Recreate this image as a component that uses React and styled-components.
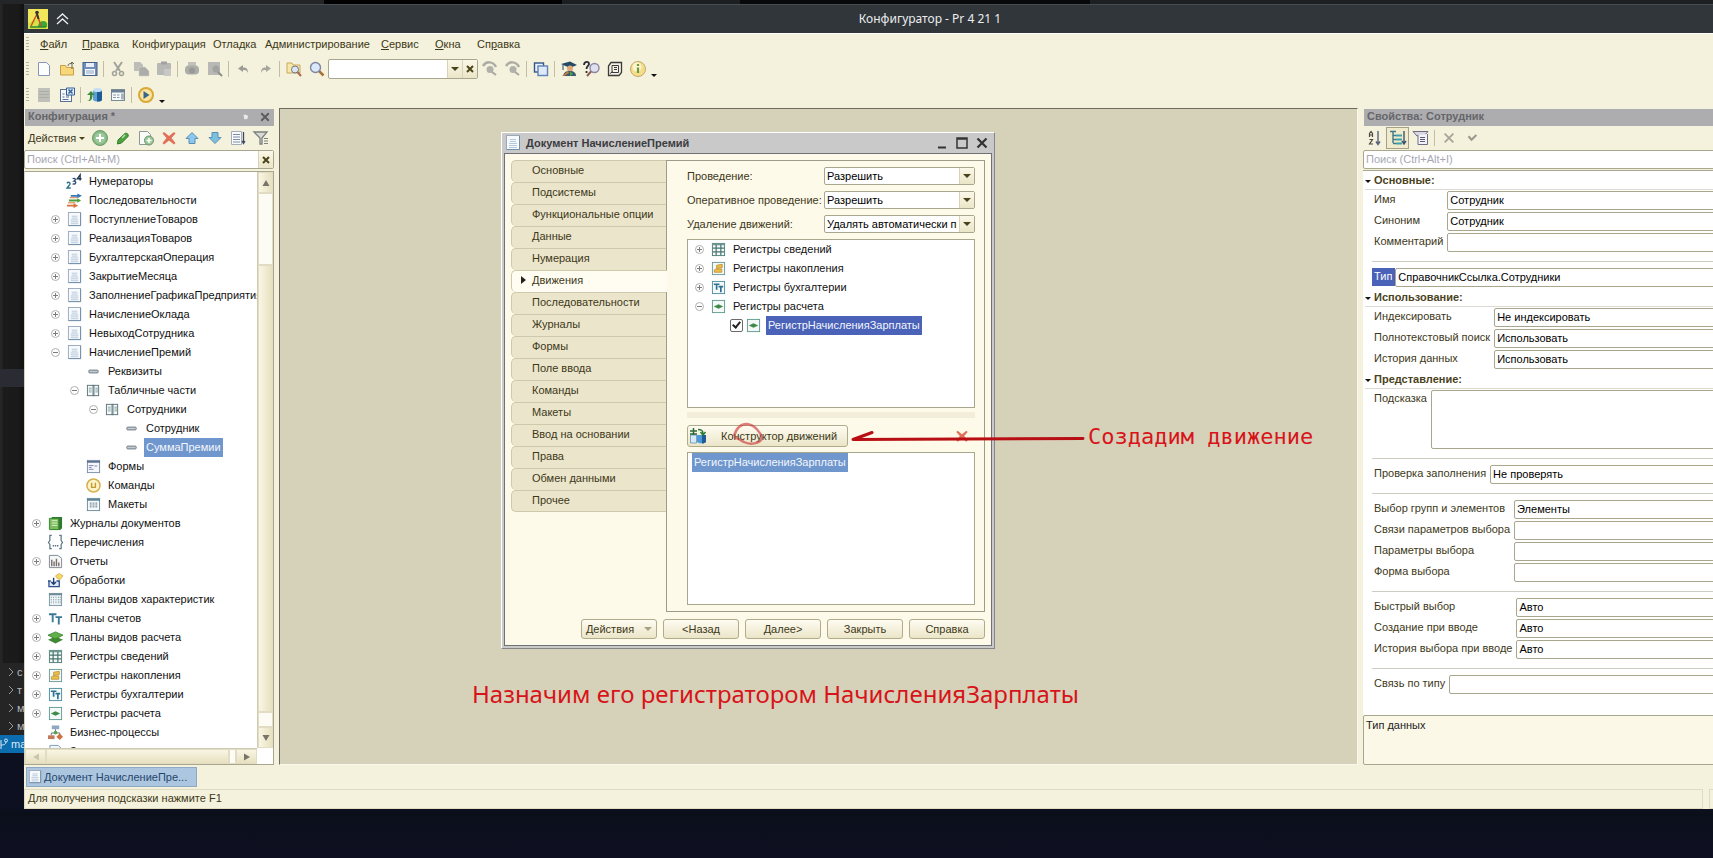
import React from "react";
import styled, { createGlobalStyle, css } from "styled-components";

const c = {
  chrome: "#f4f1dc",
  cream: "#fdfaea",
  line: "#a8a68c",
  text: "#3d3818",
  canvas: "#d6d1b9",
  header: "#adadaf",
};

const Global = createGlobalStyle`
  *, *::before, *::after { box-sizing: border-box; }
  body { margin: 0; background: #0d0f1c; }
  body, button, input, select, textarea {
    font-family: "Liberation Sans", Arial, sans-serif;
    font-size: 11px;
    line-height: 13px;
    color: ${c.text};
  }
  button { background: none; border: 0; padding: 0; }
  input, select, textarea { outline: none; margin: 0; }
  ul { list-style: none; margin: 0; padding: 0; }
  p, h1, h2, h3 { margin: 0; font-size: 11px; }
`;

/* ---------- icons ---------- */

const Svg = styled.svg`
  display: block;
  flex: none;
  overflow: visible;
`;

const sheet = (
  <>
    <rect x="1.500" y="0.500" width="13" height="14" fill="#f7fafd" stroke="#9aa8ba" />
    <path d="M14.500 1v13.500H2" fill="none" stroke="#6f8fa8" />
    <path d="M5 4.500h6M5 6.500h6M4 8.500h8M4 10.500h8M4 12.500h8" stroke="#b4c6da" />
  </>
);
const framed = (stroke, inner) => (
  <>
    <rect x="1.500" y="1.500" width="13" height="13" fill="#f4f9f8" stroke={stroke} />
    {inner}
  </>
);
const calc = <path d="M8 5.500l5 2.500-5 2.500L3 8z" fill="#3f8a48" />;
const tt = <path d="M1 3.500h8M5 3.500V12M8 6.500h7M11.500 6.500V14.500" stroke="#3a7a96" strokeWidth="2" fill="none" />;
const lens = (
  <>
    <path d="M10 10l4.500 4.500" stroke="#a8743c" strokeWidth="2.500" />
    <circle cx="6.500" cy="6.500" r="5" fill="#dbe8fa" stroke="#7d86a0" strokeWidth="1.400" />
  </>
);

const ICONS = {
  newDoc: <path d="M2.500 1.500h8l3 3v10h-11z" fill="#fbfdff" stroke="#8a93b8" />,
  open: (
    <>
      <path d="M1.500 4.500h5l1 2h7v7.500h-13z" fill="#f7d77a" stroke="#c9a048" />
      <path d="M9 5c0-2 1-2.500 4-2.500M13 1v7M11 3l2-2 2 2" fill="none" stroke="#6b6b58" />
    </>
  ),
  save: (
    <>
      <rect x="1" y="1.500" width="14" height="13" fill="#6f8fb8" stroke="#43608c" />
      <rect x="4" y="2" width="8" height="4" fill="#e7eef8" />
      <rect x="3" y="8" width="10" height="6" fill="#f5f8fc" />
      <path d="M4 10h8M4 12h8" stroke="#8ba3c4" />
    </>
  ),
  cut: (
    <>
      <path d="M4 1l6 9M12 1L6 10" stroke="#a2a29c" strokeWidth="2" />
      <circle cx="4.500" cy="12.500" r="2" fill="none" stroke="#a2a29c" strokeWidth="1.500" />
      <circle cx="11.500" cy="12.500" r="2" fill="none" stroke="#a2a29c" strokeWidth="1.500" />
    </>
  ),
  copy: (
    <>
      <path d="M1 1h6l3 3v6H1z" fill="#bcbcb8" />
      <path d="M6 6h6l4 4v5H6z" fill="#acaca8" stroke="#d4d2c4" strokeWidth=".6" />
    </>
  ),
  paste: (
    <>
      <rect x="1" y="2" width="14" height="12" rx="1" fill="#b8b8b6" />
      <rect x="5" y="0.500" width="6" height="3" fill="#a2a2a0" />
      <path d="M8 8h7v7H8z" fill="#c8c8c6" />
    </>
  ),
  print: (
    <>
      <rect x="4" y="1" width="8" height="5" fill="#c2c2bd" />
      <rect x="1" y="4.500" width="14" height="9" rx="4" fill="#acaca8" />
      <circle cx="8" cy="9.500" r="3" fill="#989894" />
    </>
  ),
  preview: (
    <>
      <path d="M1 1h12v13H1z" fill="#b8b8b4" />
      <circle cx="9" cy="8" r="3.500" fill="#a3a3a1" />
      <path d="M11 11l4 4" stroke="#8f8f8d" strokeWidth="2" />
    </>
  ),
  undo: <path d="M3 7.500L8 4v2.500c4 0 5 2 5 5.500-1-2.500-2-3-5-3V11z" fill="#9c9c95" />,
  redo: <path d="M13 7.500L8 4v2.500c-4 0-5 2-5 5.500 1-2.500 2-3 5-3V11z" fill="#a5a79c" />,
  findIn: (
    <>
      <path d="M1 2h5l1 2h7v8H1z" fill="#f8e8a8" stroke="#c8a95c" />
      <circle cx="9" cy="8.500" r="3.500" fill="#dbe6f5" stroke="#6f7485" />
      <path d="M11.500 11l3.500 4" stroke="#b06a52" strokeWidth="2" />
    </>
  ),
  find: lens,
  findNext: (
    <>
      <path d="M1 5c3-5 10-5 13 1" fill="none" stroke="#acaca4" strokeWidth="2.500" />
      <circle cx="8" cy="8.500" r="3.500" fill="#b1b1ab" />
      <path d="M10 11l4 3" stroke="#a8a7a0" strokeWidth="2" />
    </>
  ),
  windows: (
    <>
      <rect x="1.500" y="2" width="9" height="9" fill="#eaf1fb" stroke="#35548a" strokeWidth="1.400" />
      <rect x="5" y="5" width="9.500" height="9.500" fill="#dfe9f8" stroke="#5f82ba" strokeWidth="1.400" />
    </>
  ),
  scholar: (
    <>
      <path d="M0 3l9-2.500L16 4 9 7z" fill="#254a66" />
      <path d="M2 4v5" stroke="#254a66" />
      <circle cx="9" cy="7.500" r="3" fill="#e0a878" />
      <path d="M2 15c1-4 3-5 7-5s6 2 6 5H9z" fill="#3f5870" />
      <path d="M1 15l6-5 1 2-5 3z" fill="#c5813b" />
      <path d="M9 10l3 3-3 2z" fill="#45a84a" />
    </>
  ),
  syntax: (
    <>
      <path d="M0 4c0-4 5-4 5-1 0 2-2.500 2-2.500 5M2.500 10v2" fill="none" stroke="#2c2c38" strokeWidth="1.800" />
      <circle cx="10.500" cy="7" r="4.500" fill="#dfe0f0" stroke="#8b87a0" strokeWidth="1.400" />
      <path d="M7 10.500L3 15" stroke="#8c5a50" strokeWidth="2" />
    </>
  ),
  book: (
    <>
      <path d="M4 1.500h10.500v10L12 14.500H1.500V5z" fill="#f4f1e6" stroke="#3a3a36" strokeWidth="1.300" />
      <path d="M5 4.500h6.500v7H5zM7 6.500h3M7 8.500h3M3 12.500l3-2" fill="none" stroke="#3a3a36" />
    </>
  ),
  info: (
    <>
      <circle cx="8" cy="8" r="7.500" fill="#f5dd8c" stroke="#c2a86c" />
      <circle cx="7" cy="6" r="4.500" fill="#fcf3cf" />
      <path d="M8 3v2M8 6.500V12" stroke="#6a9a3c" strokeWidth="2.200" />
    </>
  ),
  listGray: (
    <>
      <rect x="2" y="1" width="12" height="14" fill="#c0c0ba" />
      <path d="M3 4.500h10M3 7.500h10M3 10.500h10" stroke="#acaca4" />
    </>
  ),
  docConf: (
    <>
      <rect x="1.500" y="2.500" width="11" height="12" fill="#f6f9fc" stroke="#5c6f92" />
      <path d="M3.500 7h2M7 8h3M3.500 10h2M7 10h3M3.500 12.500h6" stroke="#5c6f92" />
      <path d="M7.500 1h8v7h-8z" fill="#e2edf8" stroke="#345f9a" />
      <path d="M9.500 2.500l4 4M13.500 2.500l-4 4" stroke="#345f9a" strokeWidth="1.500" />
    </>
  ),
  dbUpdate: (
    <>
      <path d="M6 3v10c2 2 8 2 9 0V3z" fill="#5f9fd8" />
      <path d="M10 3v11.500c3 0 4-.5 5-1.500V3z" fill="#1c5b94" />
      <ellipse cx="10.500" cy="3" rx="4.500" ry="2" fill="#c4def5" />
      <path d="M0 14c3 0 3-3 3-6H0l4-4 4 4H5.500c0 4-1 6.500-5.500 6z" fill="#3d8a3c" />
    </>
  ),
  tableCfg: (
    <>
      <rect x="1.500" y="2.500" width="13" height="11" fill="#f7fafa" stroke="#7a8b98" />
      <path d="M1 3h14v2.500H1z" fill="#6b8092" />
      <path d="M3 8h3M3 10.500h3M7 8h2.500M7 10.500h2.500" stroke="#8a98a4" strokeWidth="1.200" />
      <path d="M11 6.500h3v6h-3z" fill="#a9b4be" />
    </>
  ),
  play: (
    <>
      <circle cx="8" cy="8" r="7" fill="#fae6a0" stroke="#d9a838" strokeWidth="2" />
      <path d="M5.500 4l6 4-6 4z" fill="#3a6488" />
    </>
  ),
  add: (
    <>
      <circle cx="8" cy="8" r="7.500" fill="#87b987" stroke="#6d9a6d" />
      <circle cx="8" cy="8" r="5.500" fill="#9aca98" />
      <path d="M8 4v8M4 8h8" stroke="#fff" strokeWidth="2" />
    </>
  ),
  edit: (
    <>
      <path d="M3 10l7-6.500c2-1 4 1 3 3L6.500 13 2.500 14z" fill="#4fa23e" stroke="#2d7a2a" />
      <path d="M7 8l3-3" stroke="#b8e2a8" strokeWidth="1.500" />
    </>
  ),
  addCopy: (
    <>
      <path d="M1.500 1.500h8l3 3v10h-11z" fill="#fbfcf8" stroke="#8a9a98" />
      <circle cx="11" cy="10.500" r="4.500" fill="#9cc898" stroke="#6d946d" />
      <path d="M11 8v5M8.500 10.500h5" stroke="#fff" strokeWidth="1.500" />
    </>
  ),
  remove: <path d="M3 2l5 4 5-4 1.500 1.500L10.500 8l4 5L13 14.500 8 10.500 3 14.500 1.500 13l4-5-4-4.500z" fill="#e0705a" />,
  up: <path d="M8 2.500l6 6H11v5H5v-5H2z" fill="#8cc8ec" stroke="#5a8fb4" />,
  down: <path d="M8 13.500l-6-6h3v-5h6v5h3z" fill="#7cc0e0" stroke="#5a8fb4" />,
  sort: (
    <>
      <path d="M1.500 1.500h10v13h-10z" fill="#f9fafb" stroke="#a5adba" />
      <path d="M3 4.500h7M3 7h7M3 9.500h7M3 12h7" stroke="#7c8da8" />
      <path d="M13.500 2v11M12 11l1.500 2.500L15 11" stroke="#3b4a63" fill="none" strokeWidth="1.300" />
    </>
  ),
  filter: (
    <>
      <path d="M1 2h13L9 8v6H7V8z" fill="#d8d8d4" stroke="#7a827e" strokeWidth="1.300" />
      <path d="M11 8.500h4M11 11h4M11 13.500h4" stroke="#7a827e" strokeWidth="1.200" />
    </>
  ),
  az: (
    <>
      <path d="M2.500 7V3.500L4 1.500l1.500 2V7M2.500 5h3M2.500 9.500h3L2.500 14h3.500" fill="none" stroke="#4a4a44" strokeWidth="1.200" />
      <path d="M11 1v13M9 11.500l2 3 2-3" fill="none" stroke="#5a6478" strokeWidth="1.400" />
    </>
  ),
  category: (
    <>
      <path d="M0 1.500h6M3 2v11M3 5.500h3M3 9.500h3M3 13.500h3" fill="none" stroke="#40788a" strokeWidth="1.400" />
      <path d="M6 5.500h6M6 9.500h6M6 13.500h6" stroke="#3fa0a8" strokeWidth="2" />
      <path d="M14 1v12M12 11l2 3 2-3" fill="none" stroke="#3f5670" strokeWidth="1.400" />
    </>
  ),
  filterList: (
    <>
      <path d="M0 1.500h15L11 6H4z" fill="#d8d6e2" stroke="#6f6c84" />
      <path d="M5 5v9.500h9.500V4" fill="#f3f2f6" stroke="#6f6c84" />
      <path d="M7 7.500h5M7 9.500h5M7 11.500h5" stroke="#5e5b78" />
    </>
  ),
  grayX: <path d="M3 3l10 10M13 3L3 13" stroke="#a5a498" strokeWidth="2" />,
  grayCheck: <path d="M4 6l3.500 4L13 4.500" fill="none" stroke="#9b9a8e" strokeWidth="2.400" />,
  numerator: (
    <>
      <path d="M0 10c1-2 4-1 3 1l-3 4h4" fill="none" stroke="#2e6f8c" strokeWidth="1.500" />
      <path d="M6 5c3-1 4 1 1.500 2.500 3 .5 2 4-1.500 3" fill="none" stroke="#2d4f76" strokeWidth="1.500" />
      <path d="M14 7V1l-3 4h4.500" fill="none" stroke="#203a54" strokeWidth="1.500" />
    </>
  ),
  sequence: (
    <>
      <path d="M4 2h7V.5L16 3l-5 2.500V4H4z" fill="#3a77b8" />
      <path d="M2 7h9V5.500L15 8l-4 2.500V9H2z" fill="#4ea03f" />
      <path d="M0 12.500h7V11l5 2.500L7 16v-1.500H0z" fill="#d6743a" />
      <path d="M3 5h8M1 10.500h8" stroke="#d6743a" />
    </>
  ),
  doc: sheet,
  attr: <rect x="3" y="6.500" width="10" height="3" rx="1" fill="#c3ccd2" stroke="#6b7880" />,
  table: (
    <>
      <rect x="1.500" y="2.500" width="12" height="11" fill="#f7fafa" stroke="#5d7277" />
      <path d="M7.500 2v12M8.500 2v12" stroke="#5d7277" />
      <path d="M3 5.500h3M3 7.500h3M3 9.500h3M10 5.500h3M10 7.500h3M10 9.500h3" stroke="#7ea0a2" />
    </>
  ),
  form: (
    <>
      <rect x="1.500" y="1.500" width="13" height="13" fill="#f5f7fb" stroke="#7d8da4" />
      <path d="M1 2h14v2H1z" fill="#5e7294" />
      <path d="M3 7h5M3 9h3M3 11h5M9 7.500h3" stroke="#7d84b0" />
    </>
  ),
  command: (
    <>
      <circle cx="8" cy="8" r="7" fill="#fcf3c8" stroke="#d5b04e" strokeWidth="1.600" />
      <path d="M6 5v5h4V5" fill="none" stroke="#c49a34" strokeWidth="1.500" />
    </>
  ),
  layout: (
    <>
      <rect x="1.500" y="1.500" width="13" height="13" fill="#f5f9fa" stroke="#6d8a9a" />
      <path d="M1 2h14v2H1z" fill="#5e8296" />
      <path d="M4 6.500h2M7 6.500h2M10 6.500h2M4 8.500h2M7 8.500h2M10 8.500h2M4 10.500h2M7 10.500h2M10 10.500h2" stroke="#5a7286" />
    </>
  ),
  journal: (
    <>
      <path d="M4 1h11v12l-2 2H4z" fill="#2f7a30" />
      <path d="M1.500 2.500h10v12h-10z" fill="#7cbc5c" stroke="#35842f" />
      <path d="M4 5h6M4 7.500h6M4 10h6" stroke="#e2f4d4" />
    </>
  ),
  enumeration: (
    <>
      <path d="M4 0.500H2V6L.5 8 2 10v4.500h2M12 0.500h2V6l1.500 2-1.500 2v4.500h-2" fill="none" stroke="#5c7482" strokeWidth="1.300" />
      <path d="M5 11.500h1.500M7.300 11.500h1.500M9.600 11.500h1.500" stroke="#5c7482" strokeWidth="1.500" />
    </>
  ),
  report: (
    <>
      <path d="M1.500 1.500h9l4 3v10h-13z" fill="#f6f7f7" stroke="#7c8690" />
      <path d="M4 13V6M6.500 13V8M9 13V5M11.500 13V9" stroke="#7a6a6a" strokeWidth="1.500" />
    </>
  ),
  processing: (
    <>
      <path d="M0 8.500h3M9 8.500h3v6H1v-6" fill="#dfe9f5" stroke="#2d4f8c" strokeWidth="1.400" />
      <path d="M6 5v7M3.500 9.500L6 12l2.500-2.500" fill="none" stroke="#1f3d74" strokeWidth="1.500" />
      <path d="M8 3l4-2.500L16 3l-3 4-3-1z" fill="#f4d868" stroke="#c9a336" strokeWidth=".7" />
    </>
  ),
  charTypes: (
    <>
      <rect x="1.500" y="1.500" width="13" height="13" fill="#f4f9fa" stroke="#7a94a2" />
      <path d="M1 2.500h14" stroke="#6f8a9a" strokeWidth="2" />
      <path d="M3.500 5v8M6 5v8M8.500 5v8M11 5v8M13 5v8" stroke="#7d98a5" strokeDasharray="1.500 1" />
    </>
  ),
  accounts: tt,
  calcTypes: (
    <>
      <path d="M8 7l8 3.500-8 4-8-4z" fill="#3f8a34" />
      <path d="M8 2l8 3.500-8 4-8-4z" fill="#62b04a" stroke="#2f7a28" strokeWidth=".8" />
    </>
  ),
  infoReg: framed(
    "#4f7d78",
    <>
      <path d="M1 2.500h14" stroke="#6f9a92" strokeWidth="2" />
      <path d="M5.500 3v11M10.500 3v11M2 6.500h12M2 10.500h12" stroke="#4b7472" strokeWidth="1.300" />
    </>
  ),
  accumReg: framed(
    "#6b9a96",
    <path d="M3.500 9.500l2-1h6v3.500h-8zM6 4.500l6-1V7l-6 1z" fill="#ecc04a" stroke="#b88a28" strokeWidth=".8" />
  ),
  accReg: framed("#4d8ea0", <path d="M3 4.500h6M6 4.500v6M8 7h5M10.500 7v6" stroke="#2f6f94" strokeWidth="1.800" fill="none" />),
  calcReg: framed("#5f9a90", calc),
  process: (
    <>
      <path d="M4 0.500h8v4H4z" fill="#8fa9c0" />
      <path d="M8 4.500v4M3.500 11V8.500h9V11" stroke="#5e6f80" fill="none" />
      <path d="M0 11h7v4H0z" fill="#c47a58" />
      <path d="M12.500 9L16 12.500 12.500 16 9 12.500z" fill="#d3703f" />
      <circle cx="8" cy="8" r="2" fill="#5fa04c" />
    </>
  ),
  task: <path d="M2 1.500h9l3 3v10H2zM5 5h5M5 8h6" fill="#f0f6fb" stroke="#7c98b0" />,
  constructor: (
    <>
      <path d="M7 7v7c2 1.800 7 1.800 9 0V7z" fill="#4d9ad6" />
      <path d="M12 7v8.500c2 0 3-.7 4-1.500V7z" fill="#1f5c98" />
      <path d="M0.500 7h6v8h-6z" fill="#d8e8f4" stroke="#5f92b8" strokeWidth=".8" />
      <path d="M3.500 0v7M0 3h7M0 6h7" stroke="#2d6a38" strokeWidth="1.500" />
      <path d="M8 1.500c4 0 5 1 5 4M10.500 4l2.500 3 2.500-3" fill="none" stroke="#2d7a38" strokeWidth="1.500" />
    </>
  ),
};

const Icon = ({ name, size = 16 }) => (
  <Svg width={size} height={size} viewBox="0 0 16 16" aria-hidden="true">
    {ICONS[name]}
  </Svg>
);

const Cross = ({ size = 8, color = "#4a4518", width = 2 }) => (
  <Svg width={size} height={size} viewBox="0 0 8 8" aria-hidden="true">
    <path d="M1 1l6 6M7 1L1 7" stroke={color} strokeWidth={width} />
  </Svg>
);

const Caret = styled.span`
  flex: none;
  width: 0;
  height: 0;
  border: 4px solid transparent;
  border-bottom: 0;
  border-top-color: ${(p) => p.$color || "#4a4518"};
`;

/* ---------- desktop behind the window ---------- */

const Desktop = styled.div`
  height: 100vh;
  min-height: 640px;
  overflow: hidden;
  display: grid;
  grid-template: 4px 1fr 49px / 24px 1fr;
  background: linear-gradient(#080b12 0, #0d1020 94%, #0b0f1a 95%, #0e1022 100%);
`;

const TopEdge = styled.div`
  grid-column: 1 / -1;
  background: linear-gradient(90deg, #232527 324px, #020203 324px 562px, #1c1f22 562px 740px, #08090a 740px 1090px, #1d2023 1090px);
`;

const EditorStrip = styled.div`
  display: flex;
  flex-direction: column;
  justify-content: flex-end;
  overflow: hidden;
  margin-bottom: 56px;
  background: linear-gradient(90deg, #262626 2px, #1b1b1b 3px, #1a1a1a 18px, #101010);
`;

const EditorHighlight = styled.div`
  height: 18px;
  margin-bottom: 276px;
  background: #2b2b33;
`;

const EditorSection = styled.div`
  display: flex;
  align-items: center;
  gap: 3px;
  height: 18px;
  padding-left: 8px;
  background: #252526;
  color: #b8b8b8;
  white-space: nowrap;
`;

const EditorStatus = styled(EditorSection)`
  padding-left: 0;
  background: #0b6cae;
  color: #dbe9f5;
`;

/* ---------- main window ---------- */

const Window = styled.main`
  display: flex;
  flex-direction: column;
  min-width: 0;
  min-height: 0;
  margin-right: -123px;
  background: ${c.chrome};
`;

const TitleBar = styled.header`
  flex: none;
  display: grid;
  grid-template-columns: 80px 1fr 80px;
  align-items: center;
  height: 29px;
  background: #31363b;
  border-top: 1px solid #474c51;
`;

const TitleIcons = styled.div`
  display: flex;
  align-items: center;
  gap: 8px;
  padding-left: 4px;
`;

const WindowTitle = styled.h1`
  text-align: center;
  font: 400 12px/18px "Noto Sans", sans-serif;
  color: #eceeef;
`;

const Grip = styled.span`
  flex: none;
  width: 3px;
  height: 14px;
  margin: 0 3px 0 2px;
  background: repeating-linear-gradient(#b5b29c 0 1px, transparent 1px 3px);
`;

const MenuBar = styled.nav`
  flex: none;
  display: flex;
  align-items: center;
  height: 23px;
  padding-bottom: 2px;
  border-top: 1px solid #fff;
`;

const MenuItem = styled.button`
  width: ${(p) => p.$w}px;
  padding-left: 8px;
  text-align: left;
  white-space: nowrap;
`;

const ToolBar = styled.div`
  flex: none;
  display: flex;
  align-items: center;
  height: 26px;
`;

const IconButton = styled.button`
  flex: none;
  display: flex;
  align-items: center;
  justify-content: center;
  width: 23px;
  height: 22px;
  ${(p) =>
    p.$active &&
    css`
      background: #f0ebcd;
      border: 1px solid #a5a189;
    `}
`;

const Separator = styled.span`
  flex: none;
  width: 1px;
  height: 16px;
  margin: 0 2px;
  background: #c2bea4;
`;

const Field = styled.div`
  display: flex;
  min-width: 0;
  height: ${(p) => p.$h || 19}px;
  background: #fff;
  border: 1px solid ${c.line};
  border-radius: 2px;
  width: ${(p) => (p.$w ? `${p.$w}px` : "auto")};
`;

const fieldText = css`
  flex: 1;
  min-width: 0;
  width: 100%;
  border: 0;
  padding: 0 2px;
  background: transparent;
  color: #000;
`;

const TextInput = styled.input`
  ${fieldText}
  &::placeholder {
    color: #a7a7b4;
    opacity: 1;
  }
`;

const Select = styled.select`
  ${fieldText}
  appearance: none;
`;

const TextArea = styled.textarea`
  ${fieldText}
  resize: none;
`;

const FieldButton = styled.button`
  flex: none;
  display: flex;
  align-items: center;
  justify-content: center;
  width: 15px;
  background: linear-gradient(#fbf8e8, #ebe5c8);
  border-left: 1px solid #d8d3b8;
`;

const DropMark = styled(FieldButton).attrs({ as: "span" })``;

const SmallCaret = styled(Caret)`
  align-self: flex-end;
  margin: 0 0 5px 2px;
  border-width: 3px 3px 0;
  border-top-color: #111;
`;

/* ---------- docked panels ---------- */

const Body = styled.div`
  flex: 1;
  min-height: 0;
  display: flex;
`;

const Dock = styled.section`
  flex: 0 0 ${(p) => p.$w}px;
  display: flex;
  flex-direction: column;
  min-height: 0;
  padding-top: 1px;
`;

const DockHeader = styled.header`
  flex: none;
  display: flex;
  align-items: center;
  gap: 12px;
  height: 17px;
  margin-left: 1px;
  padding: 0 4px 2px 3px;
  background: ${c.header};
`;

const DockTitle = styled.h2`
  flex: 1;
  color: #66666a;
`;

const DockTools = styled.div`
  flex: none;
  display: flex;
  align-items: center;
  height: 24px;
`;

const ActionsButton = styled.button`
  display: flex;
  align-items: center;
  gap: 3px;
  width: 64px;
  padding-left: 4px;
  ${Caret} {
    border-width: 3px 3px 0;
  }
`;

const TreeFrame = styled.div`
  flex: 1;
  min-height: 0;
  display: grid;
  grid-template: minmax(0, 1fr) 16px / minmax(0, 1fr) 16px;
  margin-top: 2px;
  border: 1px solid ${c.line};
  border-left-color: #d5d2c0;
  background: #fff;
`;

const TreeList = styled.ul`
  min-height: 0;
  overflow: hidden;
  color: #111;
`;

const TreeRow = styled.li`
  display: flex;
  align-items: center;
  height: 19px;
  padding-left: ${(p) => 2 + 19 * p.$level}px;
  white-space: nowrap;
`;

const Slot = styled.span`
  flex: none;
  display: flex;
  justify-content: center;
  width: ${(p) => (p.$narrow ? 16 : 19)}px;
`;

const TreeLabel = styled.span`
  margin-left: 3px;
  padding: 3px 2px;
  ${(p) =>
    p.$bg &&
    css`
      background: ${p.$bg};
      color: #f3f6fc;
    `}
`;

const Expander = ({ open }) => (
  <Svg width="9" height="9" viewBox="0 0 9 9" aria-hidden="true">
    <circle cx="4.500" cy="4.500" r="4" fill="#fff" stroke="#b0b0b0" />
    <path d={open ? "M2 4.500h5" : "M2 4.500h5M4.500 2v5"} stroke="#7c7c7c" />
  </Svg>
);

const Row = ({ level = 0, exp, icon, bg, children, check }) => (
  <TreeRow $level={level}>
    <Slot $narrow={Boolean(check)}>{check || (exp && <Expander open={exp === "-"} />)}</Slot>
    <Slot>
      <Icon name={icon} size={15} />
    </Slot>
    <TreeLabel $bg={bg}>{children}</TreeLabel>
  </TreeRow>
);

const VScroll = styled.div`
  display: grid;
  grid-template-rows: 21px 72px minmax(0, 1fr) 15px 21px;
  border-left: 1px solid #cfcbb2;
`;

const HScroll = styled.div`
  display: grid;
  grid-template-columns: 21px minmax(0, 1fr) 7px 21px;
  border-top: 1px solid #cfcbb2;
`;

const ScrollPart = styled.span`
  display: flex;
  align-items: center;
  justify-content: center;
  background: ${(p) =>
    p.$track ? "#fdfcf4" : `linear-gradient(${p.$horizontal ? "180deg" : "90deg"}, #faf7e6, #e6dfbd)`};
  box-shadow: inset 0 0 0 1px #e1dcc3;
`;

const Triangle = ({ rotate = 0, color = "#77746a" }) => (
  <Svg width="8" height="8" viewBox="0 0 8 8" aria-hidden="true">
    <path d="M4 1l3.500 6h-7z" fill={color} transform={`rotate(${rotate} 4 4)`} />
  </Svg>
);

/* ---------- workspace and document window ---------- */

const Workspace = styled.section`
  flex: 1;
  min-width: 0;
  position: relative;
  margin: 0 5px;
  background: ${c.canvas};
  border: 1px solid #fbf9ee;
  border-top-color: #6d6b60;
  border-left-color: #6d6b60;
`;

const DocWindow = styled.article`
  position: absolute;
  left: 221px;
  top: 23px;
  width: 494px;
  padding: 0 2px 2px;
  background: #c9c9c9;
  border: 1px solid #85858a;
  border-top-color: #fff;
  border-left-color: #fff;
`;

const DocTitleBar = styled.header`
  display: flex;
  align-items: center;
  gap: 5px;
  height: 20px;
  padding: 0 3px 0 1px;
`;

const DocTitle = styled.h2`
  flex: 1;
  color: #3c3c40;
`;

const DocControl = styled.button`
  display: flex;
  justify-content: center;
  width: 15px;
`;

const DocBody = styled.div`
  padding: 6px;
  background: ${c.cream};
  border: 1px solid #707076;
`;

const DocMain = styled.div`
  display: grid;
  grid-template-columns: 155px 1fr;
`;

const Tabs = styled.div`
  display: flex;
  flex-direction: column;
`;

const Tab = styled.button`
  position: relative;
  height: 22px;
  padding: 0 0 2px 20px;
  text-align: left;
  border: 1px solid #cfc9ab;
  border-bottom-width: 0;
  border-right-width: 0;
  border-radius: 5px 0 0 5px;
  background: #ebe5cc;
  &:last-child {
    border-bottom-width: 1px;
  }
  ${(p) =>
    p.$active &&
    css`
      margin-right: -1px;
      z-index: 1;
      background: #fffdf2;
      &::before {
        content: "";
        position: absolute;
        left: 9px;
        top: 5px;
        border: 4px solid transparent;
        border-left: 5px solid #222;
        border-right: 0;
      }
    `}
`;

const Page = styled.div`
  display: flex;
  flex-direction: column;
  padding: 6px 9px 6px 20px;
  border: 1px solid #9e9c88;
`;

const Form = styled.div`
  display: grid;
  grid-template-columns: 137px 1fr;
  align-items: center;
  row-gap: 6px;
  margin-bottom: 6px;
  label {
    white-space: nowrap;
  }
`;

const Box = styled.ul`
  height: ${(p) => p.$h}px;
  background: #fff;
  border: 1px solid ${c.line};
  color: #111;
`;

const BoxRow = styled.li`
  display: flex;
  padding-left: 1px;
`;

const Splitter = styled.div`
  height: 6px;
  margin: 4px 0 7px;
  background: #f2eed9;
`;

const MovementBar = styled.div`
  display: flex;
  align-items: center;
  justify-content: space-between;
  margin-bottom: 5px;
  padding-right: 2px;
`;

const buttonFace = css`
  border: 1px solid #b0ab8b;
  border-radius: 3px;
  background: linear-gradient(#fefcf2, #ebe5c8);
`;

const MovementButton = styled.button`
  ${buttonFace}
  display: flex;
  align-items: center;
  gap: 15px;
  width: 161px;
  height: 22px;
  padding-left: 2px;
`;

const Footer = styled.footer`
  display: flex;
  justify-content: flex-end;
  gap: 6px;
  padding-top: 7px;
`;

const FooterButton = styled.button`
  ${buttonFace}
  display: flex;
  align-items: center;
  justify-content: center;
  gap: 10px;
  width: 76px;
  height: 20px;
`;

const CheckBox = styled.input`
  appearance: none;
  width: 13px;
  height: 13px;
  border: 1px solid #6a6a6a;
  border-radius: 2px;
  background: #fff;
  position: relative;
  &:checked::after {
    content: "";
    position: absolute;
    left: 3px;
    top: 0;
    width: 5px;
    height: 8px;
    border: solid #222;
    border-width: 0 2px 2px 0;
    transform: rotate(40deg);
  }
`;

/* ---------- hand-made notes over the canvas ---------- */

const Marks = styled.svg`
  position: absolute;
  left: 440px;
  top: 310px;
  pointer-events: none;
`;

const Note = styled.p`
  position: absolute;
  left: ${(p) => p.$x}px;
  top: ${(p) => p.$y}px;
  white-space: pre;
  color: #d8141a;
  font: ${(p) => p.$font};
`;

/* ---------- properties ---------- */

const Props = styled.div`
  flex: 1;
  min-height: 0;
  overflow: hidden;
  margin-top: 1px;
  padding-left: 9px;
  background: #fff;
  border-top: 1px solid ${c.line};
`;

const GroupTitle = styled.h3`
  display: flex;
  align-items: center;
  gap: 2px;
  height: 19px;
  margin: 1px 0 1px -7px;
  border-bottom: 1px solid #dcdad0;
  color: #4a421c;
  &:first-child {
    margin-top: 0;
  }
  ${Caret} {
    margin: 2px 1px 0 0;
    border-width: 3px 3px 0;
  }
`;

const PropGrid = styled.div`
  display: grid;
  grid-template-columns: max-content 1fr;
  gap: 2px 4px;
  padding-left: 2px;
`;

const PropLabel = styled.label`
  padding-top: 2px;
  white-space: nowrap;
`;

const TypeRow = styled.div`
  display: flex;
  margin-bottom: 1px;
  ${Field} {
    flex: 1;
  }
`;

const TypeLabel = styled.label`
  height: 18px;
  padding: 2px 3px 3px 2px;
  background: #4a62b8;
  color: #fff;
`;

const Divider = styled.hr`
  height: 1px;
  margin: 9px 0 6px;
  border: 0;
  background: #cfcdc2;
`;

const Description = styled.div`
  flex: none;
  height: 50px;
  padding: 3px 2px;
  background: #fbf8e8;
  border: 1px solid ${c.line};
  border-radius: 2px;
  color: #222;
`;

/* ---------- bottom bars ---------- */

const TaskBar = styled.div`
  flex: none;
  height: 24px;
  padding: 2px;
`;

const TaskButton = styled.button`
  display: flex;
  align-items: center;
  gap: 2px;
  width: 171px;
  height: 20px;
  padding: 0 1px;
  background: #adc6df;
  border: 1px solid #8fa9c4;
  color: #24466e;
`;

const StatusBar = styled.footer`
  flex: none;
  display: grid;
  grid-template-columns: 1fr 127px;
  gap: 6px;
  height: 20px;
`;

const StatusCell = styled.div`
  padding: 2px 3px;
  border: 1px solid #dfdac2;
`;

/* ---------- data ---------- */

const MENU = [
  ["", "Ф", "айл", 42],
  ["", "П", "равка", 50],
  ["Конфигурация", "", "", 81],
  ["Отладка", "", "", 52],
  ["Администрирование", "", "", 116],
  ["", "С", "ервис", 54],
  ["", "О", "кна", 42],
  ["Сп", "р", "авка", 60],
];

const BAR_ONE = ["newDoc", "open", "save", "|", "cut", "copy", "paste", "|", "print", "preview", "|", "undo", "redo", "|", "findIn", "find"];
const BAR_ONE_END = ["findNext", "findNext", "|", "windows", "|", "scholar", "syntax", "book", "info"];
const BAR_TWO = ["listGray", "docConf", "|", "dbUpdate", "tableCfg", "|", "play"];

const TREE = [
  [1, "", "numerator", "Нумераторы"],
  [1, "", "sequence", "Последовательности"],
  [1, "+", "doc", "ПоступлениеТоваров"],
  [1, "+", "doc", "РеализацияТоваров"],
  [1, "+", "doc", "БухгалтерскаяОперация"],
  [1, "+", "doc", "ЗакрытиеМесяца"],
  [1, "+", "doc", "ЗаполнениеГрафикаПредприятия"],
  [1, "+", "doc", "НачислениеОклада"],
  [1, "+", "doc", "НевыходСотрудника"],
  [1, "-", "doc", "НачислениеПремий"],
  [2, "", "attr", "Реквизиты"],
  [2, "-", "table", "Табличные части"],
  [3, "-", "table", "Сотрудники"],
  [4, "", "attr", "Сотрудник"],
  [4, "", "attr", "СуммаПремии", "#6f97cd"],
  [2, "", "form", "Формы"],
  [2, "", "command", "Команды"],
  [2, "", "layout", "Макеты"],
  [0, "+", "journal", "Журналы документов"],
  [0, "", "enumeration", "Перечисления"],
  [0, "+", "report", "Отчеты"],
  [0, "", "processing", "Обработки"],
  [0, "", "charTypes", "Планы видов характеристик"],
  [0, "+", "accounts", "Планы счетов"],
  [0, "+", "calcTypes", "Планы видов расчета"],
  [0, "+", "infoReg", "Регистры сведений"],
  [0, "+", "accumReg", "Регистры накопления"],
  [0, "+", "accReg", "Регистры бухгалтерии"],
  [0, "+", "calcReg", "Регистры расчета"],
  [0, "", "process", "Бизнес-процессы"],
  [0, "", "task", "Задачи"],
];

const TABS = [
  "Основные", "Подсистемы", "Функциональные опции", "Данные", "Нумерация", "Движения", "Последовательности", "Журналы",
  "Формы", "Поле ввода", "Команды", "Макеты", "Ввод на основании", "Права", "Обмен данными", "Прочее",
];

const Tools = ({ items }) =>
  items.map((name, i) =>
    name === "|" ? (
      <Separator key={i} />
    ) : (
      <IconButton key={i} type="button" aria-label={name}>
        <Icon name={name} />
      </IconButton>
    )
  );

const Combo = ({ id, label, value }) => (
  <>
    <label htmlFor={id}>{label}</label>
    <Field $h={18}>
      <Select id={id}>
        <option>{value}</option>
      </Select>
      <DropMark>
        <Caret />
      </DropMark>
    </Field>
  </>
);

const Property = ({ id, label, value = "", kind = "input" }) => (
  <>
    <PropLabel htmlFor={id}>{label}</PropLabel>
    <Field $h={kind === "area" ? 59 : 19}>
      {kind === "input" && <TextInput id={id} defaultValue={value} />}
      {kind === "area" && <TextArea id={id} defaultValue={value} />}
      {kind === "select" && (
        <Select id={id}>
          <option>{value}</option>
        </Select>
      )}
    </Field>
  </>
);

const Group = ({ children }) => (
  <GroupTitle>
    <Caret $color="#111" />
    {children}
  </GroupTitle>
);

function ConfigurationPanel() {
  return (
    <Dock $w={250}>
      <DockHeader>
        <DockTitle>Конфигурация *</DockTitle>
        <Svg width="6" height="8" viewBox="0 0 8 8" aria-hidden="true">
          <path d="M2 1h3a3 3 0 010 6H3" fill="#e8e8ea" />
        </Svg>
        <Cross size={10} color="#5c5c60" width={1.5} />
      </DockHeader>
      <DockTools>
        <ActionsButton type="button">
          Действия <Caret />
        </ActionsButton>
        <Tools items={["add", "edit", "addCopy", "remove", "up", "down", "sort", "filter"]} />
      </DockTools>
      <Field>
        <TextInput placeholder="Поиск (Ctrl+Alt+M)" aria-label="Поиск" />
        <FieldButton type="button" aria-label="Очистить">
          <Cross />
        </FieldButton>
      </Field>
      <TreeFrame>
        <TreeList>
          {TREE.map(([level, exp, icon, text, bg]) => (
            <Row key={text} level={level} exp={exp} icon={icon} bg={bg}>
              {text}
            </Row>
          ))}
        </TreeList>
        <VScroll>
          <ScrollPart><Triangle /></ScrollPart>
          <ScrollPart $track />
          <ScrollPart />
          <ScrollPart $track />
          <ScrollPart><Triangle rotate={180} /></ScrollPart>
        </VScroll>
        <HScroll>
          <ScrollPart $horizontal><Triangle rotate={270} color="#c9c5b0" /></ScrollPart>
          <ScrollPart $horizontal />
          <ScrollPart $track />
          <ScrollPart $horizontal><Triangle rotate={90} /></ScrollPart>
        </HScroll>
      </TreeFrame>
    </Dock>
  );
}

function DocumentWindow() {
  return (
    <DocWindow>
      <DocTitleBar>
        <Icon name="doc" />
        <DocTitle>Документ НачислениеПремий</DocTitle>
        <DocControl type="button" aria-label="Свернуть">
          <Svg width="12" height="12"><path d="M2 10.500h8" stroke="#333" strokeWidth="2" /></Svg>
        </DocControl>
        <DocControl type="button" aria-label="Развернуть">
          <Svg width="12" height="12"><path d="M1 1h10v10H1zM1 2h10" fill="none" stroke="#333" strokeWidth="1.500" /></Svg>
        </DocControl>
        <DocControl type="button" aria-label="Закрыть окно">
          <Cross size={12} color="#333" width={1.5} />
        </DocControl>
      </DocTitleBar>
      <DocBody>
        <DocMain>
          <Tabs>
            {TABS.map((t) => (
              <Tab key={t} type="button" $active={t === "Движения"}>
                {t}
              </Tab>
            ))}
          </Tabs>
          <Page>
            <Form>
              <Combo id="posting" label="Проведение:" value="Разрешить" />
              <Combo id="realtime" label="Оперативное проведение:" value="Разрешить" />
              <Combo id="removal" label="Удаление движений:" value="Удалять автоматически при отмене проведения" />
            </Form>
            <Box $h={169}>
              <Row exp="+" icon="infoReg">Регистры сведений</Row>
              <Row exp="+" icon="accumReg">Регистры накопления</Row>
              <Row exp="+" icon="accReg">Регистры бухгалтерии</Row>
              <Row exp="-" icon="calcReg">Регистры расчета</Row>
              <Row
                level={2}
                icon="calcReg"
                bg="#4a62b8"
                check={<CheckBox type="checkbox" defaultChecked aria-label="РегистрНачисленияЗарплаты" />}
              >
                РегистрНачисленияЗарплаты
              </Row>
            </Box>
            <Splitter />
            <MovementBar>
              <MovementButton type="button">
                <Icon name="constructor" />
                Конструктор движений
              </MovementButton>
              <IconButton type="button" aria-label="Удалить движение">
                <Icon name="remove" size={14} />
              </IconButton>
            </MovementBar>
            <Box $h={153}>
              <BoxRow>
                <TreeLabel $bg="#6f97cd">РегистрНачисленияЗарплаты</TreeLabel>
              </BoxRow>
            </Box>
          </Page>
        </DocMain>
        <Footer>
          <FooterButton type="button">
            Действия <Caret $color="#a5a183" />
          </FooterButton>
          <FooterButton type="button">&lt;Назад</FooterButton>
          <FooterButton type="button">Далее&gt;</FooterButton>
          <FooterButton type="button">Закрыть</FooterButton>
          <FooterButton type="button">Справка</FooterButton>
        </Footer>
      </DocBody>
    </DocWindow>
  );
}

function PropertiesPanel() {
  return (
    <Dock $w={473}>
      <DockHeader>
        <DockTitle>Свойства: Сотрудник</DockTitle>
      </DockHeader>
      <DockTools>
        <IconButton type="button" aria-label="По алфавиту"><Icon name="az" /></IconButton>
        <IconButton type="button" aria-label="По категориям" $active><Icon name="category" /></IconButton>
        <IconButton type="button" aria-label="Отбор"><Icon name="filterList" /></IconButton>
        <Separator />
        <IconButton type="button" aria-label="Отмена"><Icon name="grayX" size={14} /></IconButton>
        <IconButton type="button" aria-label="Применить"><Icon name="grayCheck" size={14} /></IconButton>
      </DockTools>
      <Field>
        <TextInput placeholder="Поиск (Ctrl+Alt+I)" aria-label="Поиск свойств" />
      </Field>
      <Props>
        <Group>Основные:</Group>
        <PropGrid>
          <Property id="name" label="Имя" value="Сотрудник" />
          <Property id="synonym" label="Синоним" value="Сотрудник" />
          <Property id="comment" label="Комментарий" />
        </PropGrid>
        <Divider />
        <TypeRow>
          <TypeLabel htmlFor="type">Тип</TypeLabel>
          <Field>
            <TextInput id="type" defaultValue="СправочникСсылка.Сотрудники" />
          </Field>
        </TypeRow>
        <Group>Использование:</Group>
        <PropGrid>
          <Property id="index" kind="select" label="Индексировать" value="Не индексировать" />
          <Property id="fulltext" kind="select" label="Полнотекстовый поиск" value="Использовать" />
          <Property id="history" kind="select" label="История данных" value="Использовать" />
        </PropGrid>
        <Group>Представление:</Group>
        <PropGrid>
          <Property id="hint" kind="area" label="Подсказка" />
        </PropGrid>
        <Divider />
        <PropGrid>
          <Property id="fillcheck" kind="select" label="Проверка заполнения" value="Не проверять" />
        </PropGrid>
        <Divider />
        <PropGrid>
          <Property id="groups" kind="select" label="Выбор групп и элементов" value="Элементы" />
          <Property id="links" label="Связи параметров выбора" />
          <Property id="params" label="Параметры выбора" />
          <Property id="choiceform" label="Форма выбора" />
        </PropGrid>
        <Divider />
        <PropGrid>
          <Property id="quick" kind="select" label="Быстрый выбор" value="Авто" />
          <Property id="create" kind="select" label="Создание при вводе" value="Авто" />
          <Property id="choicehistory" kind="select" label="История выбора при вводе" value="Авто" />
        </PropGrid>
        <Divider />
        <PropGrid>
          <Property id="typelink" label="Связь по типу" />
        </PropGrid>
      </Props>
      <Description>Тип данных</Description>
    </Dock>
  );
}

export default function App() {
  return (
    <>
      <Global />
      <Desktop>
        <TopEdge />
        <EditorStrip>
          <EditorHighlight />
          {["с", "т", "м", "м"].map((t, i) => (
            <EditorSection key={i}>
              <Svg width="6" height="10" viewBox="0 0 6 10"><path d="M1 1l4 4-4 4" fill="none" stroke="#999" /></Svg>
              {t}
            </EditorSection>
          ))}
          <EditorStatus>
            <Svg width="8" height="12" viewBox="0 0 8 12">
              <path d="M1 2v9M1 7c4 0 5-1 5-4" fill="none" stroke="#dbe9f5" />
              <circle cx="6" cy="2.500" r="1.500" fill="#0b6cae" stroke="#dbe9f5" />
            </Svg>
            ma
          </EditorStatus>
        </EditorStrip>
        <Window>
          <TitleBar>
            <TitleIcons>
              <Svg width="20" height="20" viewBox="0 0 20 20" aria-hidden="true">
                <rect width="20" height="20" fill="#f2e65a" />
                <path d="M0 20V14l8-4 12 4v6z" fill="#d8e04a" />
                <path d="M10 17c1-5 8-7 9-2v3h-9z" fill="#3aa53a" />
                <path d="M9 5L3 17M9 5l4 12" fill="none" stroke="#c8541e" strokeWidth="1.500" />
                <path d="M9 5l1.500 5" stroke="#333" strokeWidth="2" />
                <circle cx="9" cy="3.500" r="1.800" fill="#333" />
                <path d="M2 18h16" stroke="#2f8a2a" strokeWidth="1.500" />
              </Svg>
              <Svg width="13" height="12" viewBox="0 0 13 12" aria-hidden="true">
                <path d="M1 6l5.500-5L12 6M1 11l5.500-5L12 11" fill="none" stroke="#eceeef" strokeWidth="1.300" />
              </Svg>
            </TitleIcons>
            <WindowTitle>Конфигуратор - Pr 4 21 1</WindowTitle>
          </TitleBar>
          <MenuBar>
            <Grip />
            {MENU.map(([before, key, after, w]) => (
              <MenuItem key={before + key + after} type="button" $w={w}>
                {before}
                {key && <u>{key}</u>}
                {after}
              </MenuItem>
            ))}
          </MenuBar>
          <ToolBar>
            <Grip />
            <Tools items={BAR_ONE} />
            <Field $w={150} $h={20}>
              <TextInput aria-label="Искать" />
              <FieldButton type="button" aria-label="Список"><Caret /></FieldButton>
              <FieldButton type="button" aria-label="Очистить"><Cross /></FieldButton>
            </Field>
            <Tools items={BAR_ONE_END} />
            <SmallCaret />
          </ToolBar>
          <ToolBar>
            <Grip />
            <Tools items={BAR_TWO} />
            <SmallCaret />
          </ToolBar>
          <Body>
            <ConfigurationPanel />
            <Workspace>
              <DocumentWindow />
              <Marks width="370" height="36" viewBox="0 0 370 36" aria-hidden="true">
                <path
                  d="M14 17c2-7 6-12 13-12 8 1 14 9 15 14-2 6-12 7-18 4-5-3-8-5-10-4"
                  fill="none"
                  stroke="#cc3a3a"
                  strokeOpacity=".65"
                  strokeWidth="2.500"
                />
                <path d="M363 19.500L133 20.500l19-7" fill="none" stroke="#b80f14" strokeWidth="3" strokeLinecap="round" strokeLinejoin="round" />
              </Marks>
              <Note $x={808} $y={314} $font={'22px/28px "DejaVu Sans Mono", monospace'}>
                Создадим движение
              </Note>
              <Note $x={192} $y={568} $font={'24px/33px "Noto Sans", sans-serif'}>
                Назначим его регистратором НачисленияЗарплаты
              </Note>
            </Workspace>
            <PropertiesPanel />
          </Body>
          <TaskBar>
            <TaskButton type="button">
              <Icon name="doc" size={14} />
              Документ НачислениеПре...
            </TaskButton>
          </TaskBar>
          <StatusBar>
            <StatusCell>Для получения подсказки нажмите F1</StatusCell>
            <StatusCell />
          </StatusBar>
        </Window>
      </Desktop>
    </>
  );
}
